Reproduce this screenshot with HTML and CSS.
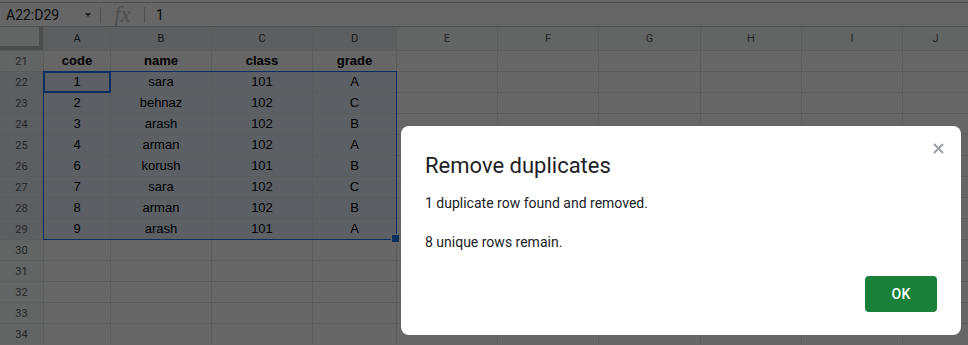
FILE: index.html
```html
<!DOCTYPE html>
<html lang="en">
<head>
  <meta charset="UTF-8" />
  <title>Remove duplicates</title>
  <link rel="stylesheet" href="styles.css">
</head>
<body>
  <div class="toolbar-edge"></div>
  <div class="formula-bar">
    <div class="name-box"><span>A22:D29</span><span class="caret"></span></div>
    <div class="sep"></div>
    <div class="fx">fx</div>
    <div class="sep"></div>
    <div class="formula">1</div>
  </div>

  <div class="sheet">
    <div class="corner"></div>
    <div class="ch hl">A</div><div class="ch hl">B</div><div class="ch hl">C</div><div class="ch hl">D</div>
    <div class="ch">E</div><div class="ch">F</div><div class="ch">G</div><div class="ch">H</div><div class="ch">I</div><div class="ch">J</div>

    <div class="rh">21</div>
    <div class="c b">code</div><div class="c b">name</div><div class="c b">class</div><div class="c b">grade</div>
    <div class="c"></div><div class="c"></div><div class="c"></div><div class="c"></div><div class="c"></div><div class="c"></div>

    <div class="rh hl">22</div>
    <div class="c in">1</div><div class="c in">sara</div><div class="c in">101</div><div class="c in">A</div>
    <div class="c"></div><div class="c"></div><div class="c"></div><div class="c"></div><div class="c"></div><div class="c"></div>

    <div class="rh hl">23</div>
    <div class="c in">2</div><div class="c in">behnaz</div><div class="c in">102</div><div class="c in">C</div>
    <div class="c"></div><div class="c"></div><div class="c"></div><div class="c"></div><div class="c"></div><div class="c"></div>

    <div class="rh hl">24</div>
    <div class="c in">3</div><div class="c in">arash</div><div class="c in">102</div><div class="c in">B</div>
    <div class="c"></div><div class="c"></div><div class="c"></div><div class="c"></div><div class="c"></div><div class="c"></div>

    <div class="rh hl">25</div>
    <div class="c in">4</div><div class="c in">arman</div><div class="c in">102</div><div class="c in">A</div>
    <div class="c"></div><div class="c"></div><div class="c"></div><div class="c"></div><div class="c"></div><div class="c"></div>

    <div class="rh hl">26</div>
    <div class="c in">6</div><div class="c in">korush</div><div class="c in">101</div><div class="c in">B</div>
    <div class="c"></div><div class="c"></div><div class="c"></div><div class="c"></div><div class="c"></div><div class="c"></div>

    <div class="rh hl">27</div>
    <div class="c in">7</div><div class="c in">sara</div><div class="c in">102</div><div class="c in">C</div>
    <div class="c"></div><div class="c"></div><div class="c"></div><div class="c"></div><div class="c"></div><div class="c"></div>

    <div class="rh hl">28</div>
    <div class="c in">8</div><div class="c in">arman</div><div class="c in">102</div><div class="c in">B</div>
    <div class="c"></div><div class="c"></div><div class="c"></div><div class="c"></div><div class="c"></div><div class="c"></div>

    <div class="rh hl">29</div>
    <div class="c in">9</div><div class="c in">arash</div><div class="c in">101</div><div class="c in">A</div>
    <div class="c"></div><div class="c"></div><div class="c"></div><div class="c"></div><div class="c"></div><div class="c"></div>

    <div class="rh">30</div>
    <div class="c"></div><div class="c"></div><div class="c"></div><div class="c"></div><div class="c"></div>
    <div class="c"></div><div class="c"></div><div class="c"></div><div class="c"></div><div class="c"></div>

    <div class="rh">31</div>
    <div class="c"></div><div class="c"></div><div class="c"></div><div class="c"></div><div class="c"></div>
    <div class="c"></div><div class="c"></div><div class="c"></div><div class="c"></div><div class="c"></div>

    <div class="rh">32</div>
    <div class="c"></div><div class="c"></div><div class="c"></div><div class="c"></div><div class="c"></div>
    <div class="c"></div><div class="c"></div><div class="c"></div><div class="c"></div><div class="c"></div>

    <div class="rh">33</div>
    <div class="c"></div><div class="c"></div><div class="c"></div><div class="c"></div><div class="c"></div>
    <div class="c"></div><div class="c"></div><div class="c"></div><div class="c"></div><div class="c"></div>

    <div class="rh">34</div>
    <div class="c"></div><div class="c"></div><div class="c"></div><div class="c"></div><div class="c"></div>
    <div class="c"></div><div class="c"></div><div class="c"></div><div class="c"></div><div class="c"></div>

    <!-- selection outlines sit over the cells -->
    <div class="range"></div>
    <div class="active"></div>
  </div>

  <div class="overlay">
    <div class="dialog">
      <div class="dialog-head">
        <h2>Remove duplicates</h2>
        <button class="close" aria-label="Close">
          <svg width="11" height="11" viewBox="0 0 11 11"><path d="M1 1L10 10M10 1L1 10" stroke="#9aa0a6" stroke-width="2" /></svg>
        </button>
      </div>
      <p>1 duplicate row found and removed.</p>
      <p>8 unique rows remain.</p>
      <div class="dialog-foot"><button class="ok">OK</button></div>
    </div>
  </div>
</body>
</html>
```

FILE: styles.css
```css
* {
  box-sizing: border-box;
}
body {
  margin: 0;
  width: 968px;
  height: 345px;
  overflow: hidden;
  background: #fff;
  font-family: Roboto, "Liberation Sans", sans-serif;
}

.toolbar-edge {
  height: 3px;
  border-bottom: 1px solid #c4c7c5;
}
.formula-bar {
  height: 24px;
  display: flex;
  align-items: center;
  border-bottom: 1px solid #c4c7c5;
  color: #202124;
  font-size: 14px;
}
.name-box {
  width: 100px;
  padding: 0 6px;
  display: flex;
  align-items: center;
  justify-content: space-between;
}
.caret {
  width: 0;
  height: 0;
  border-left: 3.5px solid transparent;
  border-right: 3.5px solid transparent;
  border-top: 4px solid #5f6368;
  margin-right: 3px;
}
.sep {
  width: 1px;
  height: 16px;
  background: #c4c7c5;
}
.fx {
  width: 43px;
  text-align: center;
  font-family: "Liberation Serif", serif;
  font-style: italic;
  font-size: 23px;
  line-height: 23px;
  color: #c4c7c5;
}
.formula {
  padding-left: 11px;
}

.sheet {
  position: relative;
  display: grid;
  grid-template-columns: 43px 66px 100px 100px 83px 100px 100px 101px 100px 100px 1fr;
  grid-template-rows: 23px;
  grid-auto-rows: 20px;
  gap: 1px;
  background: #e2e3e3;
}
.corner {
  background: #f8f9fa;
  border-right: 4px solid #c0c0c0;
  border-bottom: 4px solid #c0c0c0;
}
.ch, .rh {
  background: #f8f9fa;
  color: #5f6368;
  font-size: 11px;
  display: flex;
  align-items: center;
  justify-content: center;
}
.ch.hl, .rh.hl {
  background: #e8eaed;
}
.ch.hl {
  color: #3c4043;
}
.c {
  background: #fff;
  font-family: "Liberation Sans", Arial, sans-serif;
  font-size: 13px;
  line-height: 20px;
  text-align: center;
  color: #000;
}
.c.b {
  font-weight: bold;
}
.c.in {
  background: #e7f0fd;
}
.range {
  position: absolute;
  grid-column: 2 / 6;
  grid-row: 3 / 11;
  inset: -1px;
  border: 1px solid #1a73e8;
}
.range::after {
  content: "";
  position: absolute;
  right: -4px;
  bottom: -4px;
  width: 7px;
  height: 7px;
  background: #1a73e8;
  border: 1px solid #fff;
}
.active {
  position: absolute;
  grid-column: 2 / 3;
  grid-row: 3 / 4;
  inset: -1px;
  border: 2px solid #1a73e8;
}

.overlay {
  position: fixed;
  inset: 0;
  background: rgba(0, 0, 0, 0.6);
  display: flex;
  justify-content: flex-end;
  align-items: flex-start;
  padding: 126px 7px 0 0;
}
.dialog {
  width: 560px;
  height: 209px;
  background: #fff;
  border-radius: 8px;
  padding: 26px 24px 23px 24px;
  display: flex;
  flex-direction: column;
  color: #202124;
}
.dialog-head {
  display: flex;
  justify-content: space-between;
  align-items: flex-start;
}
.dialog h2 {
  margin: 0;
  font-size: 22px;
  font-weight: 400;
  line-height: 28px;
}
.close {
  margin: -9px -7px 0 0;
  padding: 0;
  border: none;
  background: none;
  width: 11px;
  height: 11px;
  display: flex;
}
.dialog p {
  margin: 13px 0 0;
  font-size: 14px;
  line-height: 20px;
}
.dialog p + p {
  margin-top: 19px;
}
.dialog-foot {
  margin-top: auto;
  display: flex;
  justify-content: flex-end;
}
.ok {
  width: 72px;
  height: 36px;
  border: none;
  border-radius: 4px;
  background: #188038;
  color: #fff;
  font-family: Roboto, sans-serif;
  font-size: 14px;
  font-weight: 500;
  letter-spacing: 0.3px;
}
```
